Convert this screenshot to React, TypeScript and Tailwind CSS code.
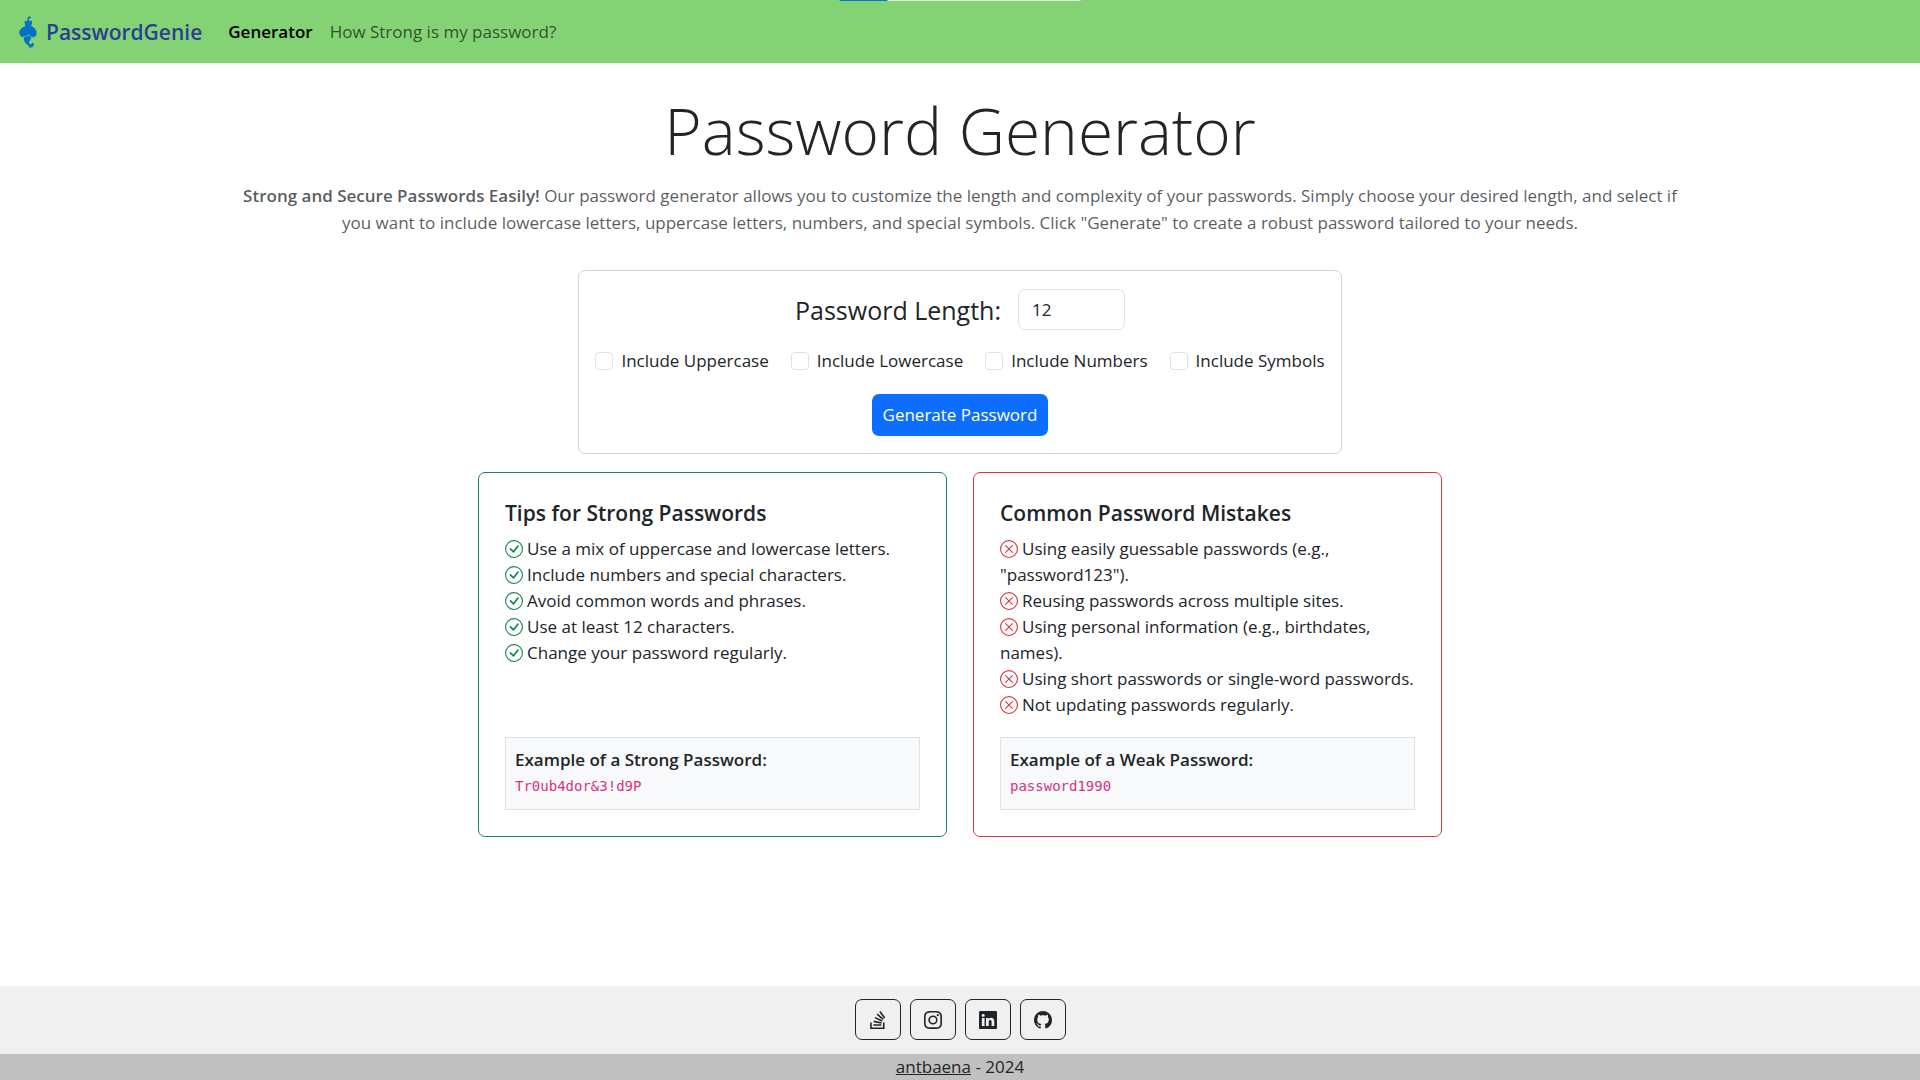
import {
  BsCheckCircle,
  BsXCircle,
  BsStackOverflow,
  BsInstagram,
  BsLinkedin,
  BsGithub,
} from "react-icons/bs";
import type { IconType } from "react-icons";

const options = ["Uppercase", "Lowercase", "Numbers", "Symbols"];

const tips = [
  "Use a mix of uppercase and lowercase letters.",
  "Include numbers and special characters.",
  "Avoid common words and phrases.",
  "Use at least 12 characters.",
  "Change your password regularly.",
];

const mistakes = [
  'Using easily guessable passwords (e.g., "password123").',
  "Reusing passwords across multiple sites.",
  "Using personal information (e.g., birthdates, names).",
  "Using short passwords or single-word passwords.",
  "Not updating passwords regularly.",
];

const socials: { label: string; Icon: IconType }[] = [
  { label: "Stack Overflow", Icon: BsStackOverflow },
  { label: "Instagram", Icon: BsInstagram },
  { label: "LinkedIn", Icon: BsLinkedin },
  { label: "GitHub", Icon: BsGithub },
];

function GenieLogo() {
  return (
    <svg viewBox="0 0 54 96" className="h-8 w-[18px]" fill="#0670c4" aria-hidden="true">
      <path d="M25 15 C24 6 27 1 33 1 L36 5 L33 8 C30 6 29 9 29 15Z" />
      <path d="M17 14 L22 16 C26 12 31 12 34 16 L39 14 L39 23 L36 31 C46 33 53 42 53 51 C53 58 49 63 43 64 L36 63 C37 70 31 77 29 81 C33 85 38 86 40 82 L37 80 L45 82 C46 91 40 95 34 95 L27 93 L33 91 C25 88 17 82 15 73 L14 63 C7 64 1 58 1 51 C1 42 9 33 20 31 L17 24Z" />
      <path d="M12 62 C22 62 26 60 31 54 M27 57 L38 64" fill="none" stroke="#83d374" strokeWidth="2" />
    </svg>
  );
}

type AdviceProps = {
  title: string;
  items: string[];
  Icon: IconType;
  border: string;
  tint: string;
  exampleTitle: string;
  example: string;
};

function AdviceCard({ title, items, Icon, border, tint, exampleTitle, example }: AdviceProps) {
  return (
    <section className={`flex flex-1 flex-col rounded-[7px] border p-[26px] ${border}`}>
      <h2 className="mb-[9px] text-[21px] font-semibold leading-[28px]">{title}</h2>
      <ul className="mb-[19px] flex-1">
        {items.map((item) => (
          <li key={item}>
            <Icon className={`mr-1 inline size-[18px] align-[-3px] ${tint}`} />
            {item}
          </li>
        ))}
      </ul>
      <div className="border border-[#dee2e6] bg-[#f8f9fa] p-[9px]">
        <p className="font-semibold">{exampleTitle}</p>
        <code className="block font-['DejaVu_Sans_Mono',monospace] text-sm leading-[27px] text-[#d63384]">{example}</code>
      </div>
    </section>
  );
}

export default function App() {
  return (
    <div className="flex min-h-screen flex-col bg-white font-['Open_Sans',sans-serif] text-[17px] leading-[26px] text-[#212529]">
      <div className="absolute left-1/2 top-0 h-px w-[241px] -translate-x-1/2 bg-[#e5e5e5]">
        <div className="h-px w-12 bg-[#0078d4]" />
      </div>
      <header className="flex h-[63px] items-center bg-[#83d374] px-[19px]">
        <a href="#home" className="mr-[26px] flex items-center gap-[9px] text-[21px] font-semibold text-[#2b3f95]">
          <GenieLogo />
          PasswordGenie
        </a>
        <nav className="flex gap-[17px]">
          <a href="#generator" className="font-semibold text-black">Generator</a>
          <a href="#strength" className="text-black/65">How Strong is my password?</a>
        </nav>
      </header>

      <main className="flex flex-1 flex-col items-center px-4 pt-[26px]">
        <h1 className="mb-[9px] text-center text-[64px] font-light leading-[84px]">Password Generator</h1>
        <p className="mb-[34px] max-w-[1452px] text-center leading-[27px] text-[#212529]/75">
          <strong className="font-semibold">Strong and Secure Passwords Easily!</strong> Our password generator allows
          you to customize the length and complexity of your passwords. Simply choose your desired length, and select if
          you want to include lowercase letters, uppercase letters, numbers, and special symbols. Click "Generate" to
          create a robust password tailored to your needs.
        </p>

        <form
          className="mb-[18px] flex flex-col items-center rounded-[7px] border border-[#d3d4d5] px-4 pb-[17px] pt-[18px]"
          onSubmit={(e) => e.preventDefault()}
        >
          <div className="mb-[18px] flex items-center gap-[17px]">
            <label htmlFor="length" className="text-[25px]">Password Length:</label>
            <input
              id="length"
              type="number"
              defaultValue={12}
              className="h-[41px] w-[107px] rounded-[7px] border border-[#dee2e6] px-[13px]"
            />
          </div>
          <div className="mb-5 flex gap-[22px]">
            {options.map((name) => (
              <label key={name} className="flex items-center gap-2">
                <input
                  type="checkbox"
                  className="size-[18px] appearance-none rounded-[4px] border border-[#dee2e6] bg-white checked:bg-[#0d6efd]"
                />
                Include {name}
              </label>
            ))}
          </div>
          <button type="submit" className="h-[42px] rounded-[7px] bg-[#0d6efd] px-[11px] text-white">
            Generate Password
          </button>
        </form>

        <div className="flex w-full max-w-[964px] gap-[26px]">
          <AdviceCard
            title="Tips for Strong Passwords"
            items={tips}
            Icon={BsCheckCircle}
            border="border-[#198754]"
            tint="text-[#198754]"
            exampleTitle="Example of a Strong Password:"
            example="Tr0ub4dor&3!d9P"
          />
          <AdviceCard
            title="Common Password Mistakes"
            items={mistakes}
            Icon={BsXCircle}
            border="border-[#dc3545]"
            tint="text-[#dc3545]"
            exampleTitle="Example of a Weak Password:"
            example="password1990"
          />
        </div>
      </main>

      <footer>
        <div className="flex justify-center gap-[9px] bg-[#f0f0f0] pb-[14px] pt-[13px]">
          {socials.map(({ label, Icon }) => (
            <a
              key={label}
              href="#social"
              aria-label={label}
              className="flex h-[41px] w-[46px] items-center justify-center rounded-[7px] border border-[#212529]"
            >
              <Icon className="size-[18px]" />
            </a>
          ))}
        </div>
        <p className="bg-[#c0c0c0] text-center">
          <a href="#author" className="underline">antbaena</a> - 2024
        </p>
      </footer>
    </div>
  );
}
